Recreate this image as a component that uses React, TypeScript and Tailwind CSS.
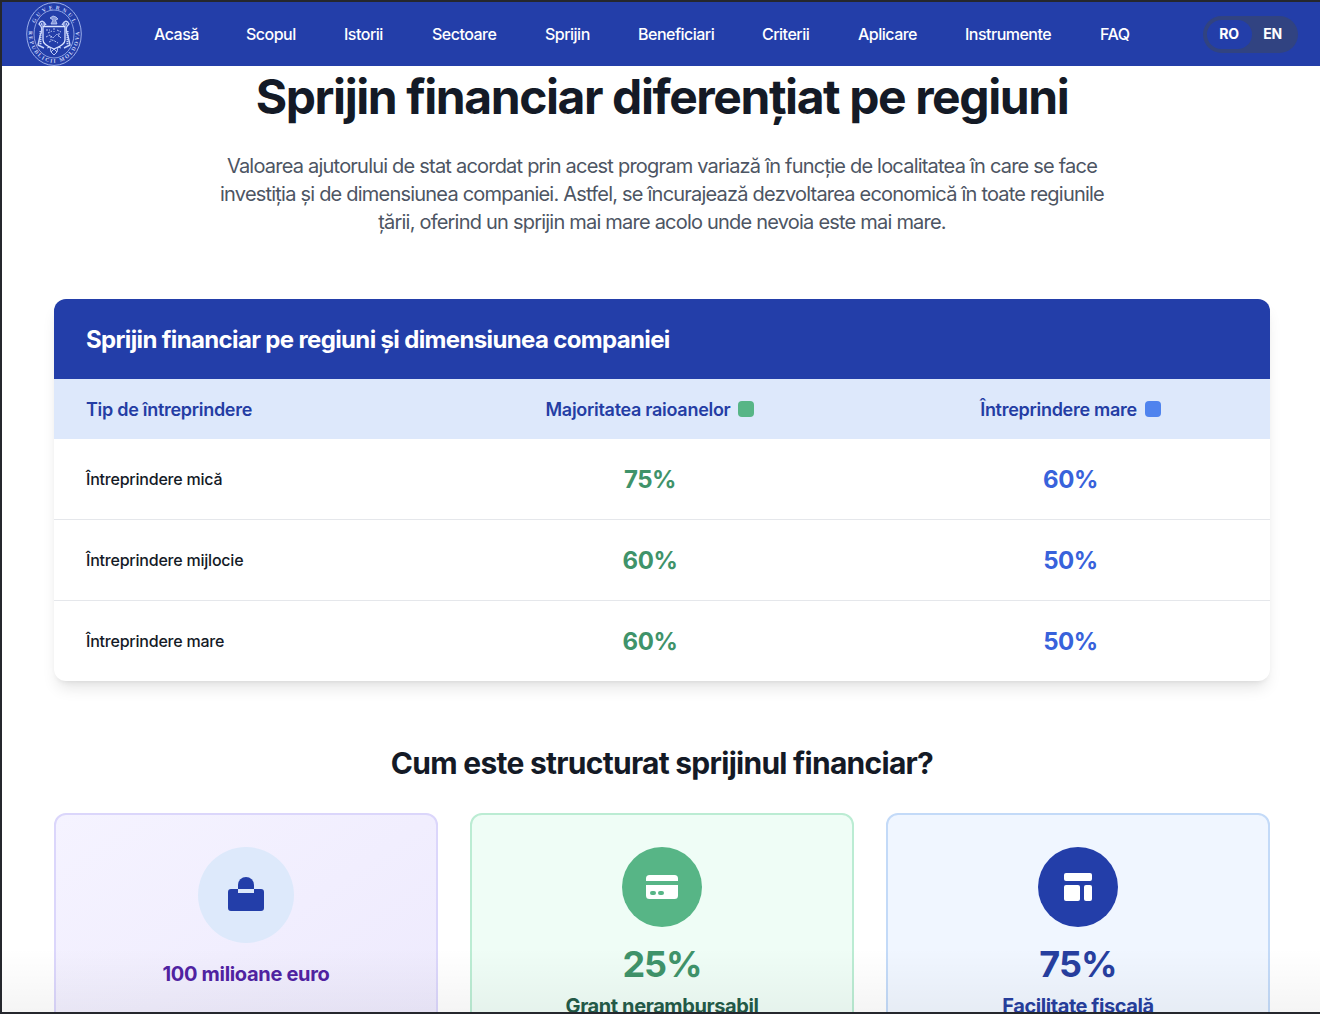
import React from 'react';

const navItems = [
  { label: 'Acasă', width: 'w-11' },
  { label: 'Scopul', width: 'w-[50px]' },
  { label: 'Istorii', width: 'w-10' },
  { label: 'Sectoare', width: 'w-[65px]' },
  { label: 'Sprijin', width: 'w-[45px]' },
  { label: 'Beneficiari', width: 'w-[76px]' },
  { label: 'Criterii', width: 'w-12' },
  { label: 'Aplicare', width: 'w-[59px]' },
  { label: 'Instrumente', width: 'w-[87px]' },
  { label: 'FAQ', width: 'w-[30px]' },
];

const rows = [
  { name: 'Întreprindere mică', most: '75%', large: '60%' },
  { name: 'Întreprindere mijlocie', most: '60%', large: '50%' },
  { name: 'Întreprindere mare', most: '60%', large: '50%' },
];

function Emblem() {
  return (
    <svg viewBox="0 0 56 64" className="h-16 w-14 shrink-0" fill="none" stroke="#a9bbf0" aria-hidden="true">
      <defs>
        <path id="ring-top" d="M7.500 25 A21.500 25.300 0 0 1 48.500 25" />
        <path id="ring-bottom" d="M3 27 A25.300 29.300 0 1 0 53 27" />
      </defs>
      <ellipse cx="28" cy="32" rx="27.3" ry="31.4" strokeWidth="0.9" />
      <ellipse cx="28" cy="32" rx="20" ry="24" strokeWidth="0.8" />
      <g fill="#c9d5fa" stroke="none" fontSize="5.5" fontFamily="Liberation Serif, serif" fontWeight="700">
        <text>
          <textPath href="#ring-top" startOffset="4" textLength="50">
            GUVERNUL
          </textPath>
        </text>
        <text>
          <textPath href="#ring-bottom" startOffset="2" textLength="90">
            REPUBLICII MOLDOVA
          </textPath>
        </text>
      </g>
      <g strokeLinejoin="round" stroke="#c6d3fa">
        <path d="M24 16 L27 14 L30 15 L32 17 L29.500 18 L31 22 H25 L27 18 Z" fill="#c6d3fa" fillOpacity="0.6" strokeWidth="0.8" />
        <path d="M17 24.500 H39 V38 Q39 43 28 47 Q17 43 17 38 Z" strokeWidth="1.3" stroke="#dbe4ff" />
        <path d="M20 23 Q16 16 13 22 Q18 26 14 34 L12 43 L18 46 M36 23 Q40 16 43 22 Q38 26 42 34 L44 43 L38 46" strokeWidth="1.400" />
        <path d="M15 22 L19 23 M41 22 L37 23" strokeWidth="2.600" strokeDasharray="1 0.600" />
        <path d="M14.500 29 V43 M41.500 29 V43" strokeWidth="2" strokeDasharray="1.200 0.800" />
        <path d="M21 46 L24 45 L25 50 L28 47 L31 50 L32 45 L35 46 M25 50 L28 53 L31 50" strokeWidth="0.900" />
        <path
          d="M20 28 H24 M22 31 L26 29 M31 28 L35 30 M20 35 L24 33 L27 36 L31 32 L35 36 M23 40 L27 38 L32 41 M28 26 V30 M25 34 V38 M33 31 V35"
          strokeWidth="0.900"
          strokeDasharray="2 1"
        />
      </g>
    </svg>
  );
}

function Header() {
  return (
    <header className="relative flex h-16 items-center bg-[#233ea9] pl-6 text-white">
      <Emblem />
      <nav className="ml-[72px] flex gap-12 text-base font-medium tracking-[-0.032em]">
        {navItems.map((item) => (
          <a key={item.label} href="#" className={`${item.width} whitespace-nowrap`}>
            {item.label}
          </a>
        ))}
      </nav>
      <div className="ml-[73px] flex h-[37px] w-[95px] shrink-0 items-center rounded-full bg-[#314381] p-1 text-sm font-bold tracking-[-0.02em]">
        <button className="flex h-[29px] w-[45px] items-center justify-center rounded-full bg-[#233ea9] pr-px">RO</button>
        <button className="flex h-[29px] w-[41px] items-center justify-center">EN</button>
      </div>
    </header>
  );
}

function SupportTable() {
  return (
    <section className="mt-[63px] overflow-hidden rounded-xl bg-white shadow-[0_10px_15px_-3px_rgba(0,0,0,0.1),0_4px_6px_-4px_rgba(0,0,0,0.1)]">
      <h2 className="flex h-20 items-center bg-[#233ea9] px-8 pt-0.5 text-2xl font-bold tracking-[-0.027em] text-white">
        Sprijin financiar pe regiuni și dimensiunea companiei
      </h2>
      <table className="w-full table-fixed border-separate border-spacing-0">
        <colgroup>
          <col className="w-[375px]" />
          <col className="w-[442px]" />
          <col className="w-[399px]" />
        </colgroup>
        <thead>
          <tr className="h-[60px] bg-[#dde8fb] text-lg tracking-[-0.016em] text-[#243da4]">
            <th className="px-8 pt-0.5 text-left font-semibold">Tip de întreprindere</th>
            <th className="font-semibold">
              <span className="inline-flex items-center gap-2">
                <span className="pt-0.5">Majoritatea raioanelor</span>
                <span className="size-4 rounded bg-[#57b586]" />
              </span>
            </th>
            <th className="font-semibold">
              <span className="inline-flex items-center gap-2">
                <span className="pt-0.5">Întreprindere mare</span>
                <span className="size-4 rounded bg-[#4f83ee]" />
              </span>
            </th>
          </tr>
        </thead>
        <tbody className="[&>tr:not(:last-child)>td]:border-b [&>tr:not(:last-child)>td]:border-gray-200">
          {rows.map((row) => (
            <tr key={row.name} className="h-[81px] last:h-20">
              <td className="px-8 font-medium tracking-[-0.0135em] text-[#141a26]">{row.name}</td>
              <td className="pt-0.5 text-center text-2xl font-bold tracking-[-0.018em] text-[#3f936a]">{row.most}</td>
              <td className="pt-0.5 text-center text-2xl font-bold tracking-[-0.018em] text-[#3862db]">{row.large}</td>
            </tr>
          ))}
        </tbody>
      </table>
    </section>
  );
}

function FundIcon() {
  return (
    <svg viewBox="0 0 36 36" className="size-9" fill="#233ea9" aria-hidden="true">
      <path d="M10 12V8a8 8 0 0 1 16 0v4Z" />
      <path d="M3 12H10V16H26V12H33a3 3 0 0 1 3 3V31a3 3 0 0 1-3 3H3a3 3 0 0 1-3-3V15a3 3 0 0 1 3-3Z" />
    </svg>
  );
}

function CreditIcon() {
  return (
    <svg viewBox="0 0 32 24" className="h-6 w-8" fill="white" aria-hidden="true">
      <path d="M0 6V3.500A3.500 3.500 0 0 1 3.500 0h25A3.500 3.500 0 0 1 32 3.500V6Z" />
      <path
        fillRule="evenodd"
        d="M0 10H32V20.500a3.500 3.500 0 0 1-3.500 3.500H3.500A3.500 3.500 0 0 1 0 20.500ZM6 16a2 2 0 0 0 0 4H8a2 2 0 0 0 0-4ZM14 16a2 2 0 0 0 0 4h2a2 2 0 0 0 0-4Z"
      />
    </svg>
  );
}

function TemplateIcon() {
  return (
    <svg viewBox="0 0 28 28" className="size-7" fill="white" aria-hidden="true">
      <rect width="28" height="8" rx="2" />
      <rect y="12" width="16" height="16" rx="2" />
      <rect x="20" y="12" width="8" height="16" rx="2" />
    </svg>
  );
}

function Cards() {
  return (
    <div className="mt-8 grid grid-cols-3 gap-8 text-center">
      <article className="flex h-[260px] flex-col items-center rounded-xl border-2 border-[#dbd6fb] bg-gradient-to-br from-[#f5f3ff] to-[#ede9fd] pt-8">
        <div className="flex size-24 items-center justify-center rounded-full bg-[#dde9fb]">
          <FundIcon />
        </div>
        <h4 className="mt-[17px] text-xl leading-7 font-bold tracking-[-0.016em] text-[#5023a3]">100 milioane euro</h4>
      </article>
      <article className="flex h-[260px] flex-col items-center rounded-xl border-2 border-[#bbecd3] bg-[#effdf6] pt-8">
        <div className="flex size-20 items-center justify-center rounded-full bg-[#57b586]">
          <CreditIcon />
        </div>
        <p className="mt-[17px] text-4xl leading-10 font-bold tracking-[-0.028em] text-[#3f936a]">25%</p>
        <h4 className="mt-2 text-xl leading-7 font-bold tracking-[-0.02em] text-[#245c49]">Grant nerambursabil</h4>
      </article>
      <article className="flex h-[260px] flex-col items-center rounded-xl border-2 border-[#c3daf8] bg-[#f0f6ff] pt-8">
        <div className="flex size-20 items-center justify-center rounded-full bg-[#233ea9]">
          <TemplateIcon />
        </div>
        <p className="mt-[17px] text-4xl leading-10 font-bold tracking-[-0.024em] text-[#273f9f]">75%</p>
        <h4 className="mt-2 text-xl leading-7 font-bold tracking-[-0.022em] text-[#273f9f]">Facilitate fiscală</h4>
      </article>
    </div>
  );
}

export default function App() {
  return (
    <div className="relative h-[1014px] w-[1320px] overflow-hidden border-y-2 border-l-2 border-[#25272d] bg-white font-[Inter,sans-serif] text-[#141a26]">
      <Header />
      <main className="ml-13 w-[1216px]">
        <h1 className="pt-[7px] text-center text-5xl leading-[48px] font-bold tracking-[-0.0297em] whitespace-nowrap">
          Sprijin financiar diferențiat pe regiuni
        </h1>
        <p className="mt-[31px] text-center text-xl leading-7 tracking-[-0.0393em] whitespace-nowrap text-[#4d5563]">
          Valoarea ajutorului de stat acordat prin acest program variază în funcție de localitatea în care se face
          <br />
          investiția și de dimensiunea companiei. Astfel, se încurajează dezvoltarea economică în toate regiunile
          <br />
          țării, oferind un sprijin mai mare acolo unde nevoia este mai mare.
        </p>
        <SupportTable />
        <h3 className="mt-16 text-center text-3xl leading-9 font-bold tracking-[-0.0243em]">
          Cum este structurat sprijinul financiar?
        </h3>
        <Cards />
      </main>
      <div className="pointer-events-none absolute inset-x-0 bottom-0 h-16 bg-gradient-to-b from-transparent to-black/4" />
    </div>
  );
}
